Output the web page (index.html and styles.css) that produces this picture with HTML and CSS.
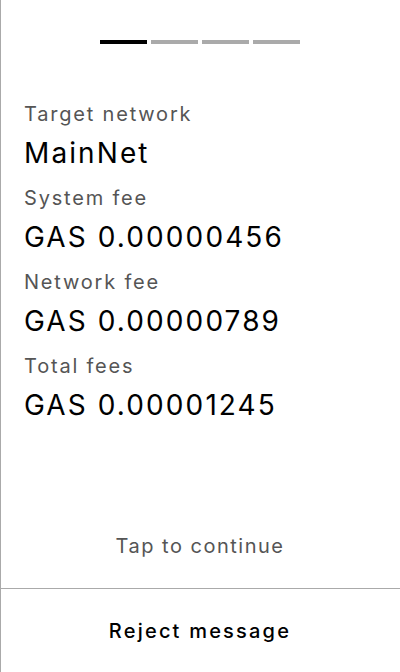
FILE: index.html
```html
<!DOCTYPE html>
<html lang="en">
<head>
<meta charset="utf-8">
<title>Confirm transaction</title>
<link rel="stylesheet" href="styles.css">
</head>
<body>
<div class="screen">
  <div class="progress">
    <span class="seg active"></span>
    <span class="seg"></span>
    <span class="seg"></span>
    <span class="seg"></span>
  </div>
  <div class="details">
    <div class="label">Target network</div>
    <div class="value">MainNet</div>
    <div class="label">System fee</div>
    <div class="value">GAS 0.00000456</div>
    <div class="label">Network fee</div>
    <div class="value">GAS 0.00000789</div>
    <div class="label">Total fees</div>
    <div class="value">GAS 0.00001245</div>
  </div>
  <div class="hint">Tap to continue</div>
  <div class="reject">Reject message</div>
</div>
</body>
</html>
```
FILE: styles.css
```css
* { box-sizing: border-box; }
html, body { margin: 0; padding: 0; background: #fff; }
body { font-family: Inter, "Noto Sans", sans-serif; color: #000; }
.screen {
  width: 400px;
  height: 672px;
  box-shadow: inset 1px 0 0 #aaa;
  display: flex;
  flex-direction: column;
}
.progress {
  display: flex;
  justify-content: center;
  gap: 4px;
  margin-top: 40px;
}
.seg { width: 47px; height: 4px; background: #aaa; }
.seg.active { background: #000; }
.details {
  padding: 56px 0 0 24px;
  display: flex;
  flex-direction: column;
}
.label { font-size: 20px; line-height: 28px; color: #555; height: 34px; letter-spacing: 1.8px; }
.value { font-size: 28px; line-height: 36px; height: 50px; padding-top: 1px; letter-spacing: 2.1px; }
.hint {
  margin-top: auto;
  text-align: center;
  font-size: 20px;
  line-height: 28px;
  color: #555;
  letter-spacing: 1.5px;
  padding-bottom: 28px;
}
.reject {
  border-top: 1px solid #aaa;
  height: 84px;
  display: flex;
  align-items: center;
  justify-content: center;
  font-size: 20px;
  font-weight: 500;
  letter-spacing: 2.2px;
}
```
